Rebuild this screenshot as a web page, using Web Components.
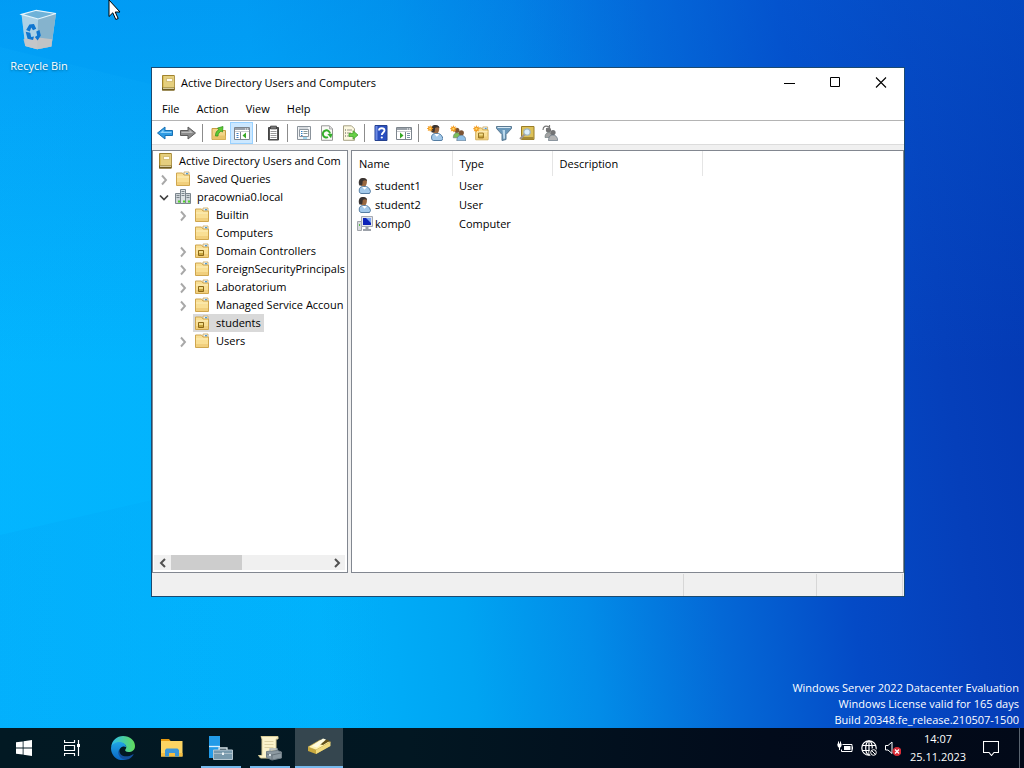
<!DOCTYPE html>
<html lang="en">
<head>
<meta charset="utf-8">
<title>Desktop</title>
<style>
  html, body { margin: 0; height: 100%; }
  body { font-family: "Open Sans", "Noto Sans", sans-serif; font-size: 11px; line-height: 16px; color: #000; overflow: hidden; }
</style>
</head>
<body>
<desk-top>
  <desktop-icon icon="bin">Recycle Bin</desktop-icon>
  <app-window slot="window" heading="Active Directory Users and Computers">
    <menu-bar slot="menu"></menu-bar>
    <tool-bar slot="tools"></tool-bar>
    <tree-view slot="tree"></tree-view>
    <list-view slot="list"></list-view>
    <status-bar slot="status"></status-bar>
  </app-window>
  <license-note slot="note"></license-note>
  <task-bar slot="taskbar"></task-bar>
</desk-top>

<script>
const folder = `<path d="M9 1h5v4H9z" fill="#eef4f8" stroke="#c9a455" stroke-width=".8"/><path d="M11 2h2v1.500h-2z" fill="#4b9bd8"/><path d="M1.500 3V2h6l1.500 2h5.500v10.500h-13z" fill="#f9df94" stroke="#cfa64e"/><path d="M2 5.500h12v1H2z" fill="#fdeebd"/><path d="M2 11h12v3H2z" fill="#f1cf7c"/>`;
const ouMark = `<path d="M4.500 7.500h5v5h-5z" fill="#c9a640" stroke="#8a6717"/><path d="M5 8h4v2H5z" fill="#f3dc88"/>`;
const user = `<path d="M3 2.500C3.500-.3 9-.8 9.800 2.500c.5 2.300-.5 5.500-2 6.500L4 7.500C2.500 6 2.500 4 3 2.500z" fill="#9a6840"/><path d="M2.500 7.500C1 5 1.500-.5 6.200 0c3 .2 4 1.500 3.800 3C8.500 2 7 2.300 5.800 3l-.6 4.500z" fill="#3a3432"/><path d="M5 7h3v3H5z" fill="#a8703f"/><path d="M2.500 14.500c-.8-4 .5-5.500 3-6 4-.5 7 .5 8 5l-1 2H4z" fill="#a3c9ea" stroke="#45709a" stroke-width=".9"/><path d="M5 8.800l2.500 3L10 9.200" fill="#fff"/>`;
const star = `<path d="M4.500 0l1 2.600L8 1.500 7 4l2.500 1-2.500 1 1 2.500-2.500-1L4.500 10l-1-2.500L1 8.500 2 6-.5 5 2 4 1 1.500l2.500 1.100z" fill="#f39a1c"/><circle cx="4.500" cy="5" r="1.500" fill="#ffd66b"/>`;
const people = (a, b, s) => `<circle cx="6.500" cy="5" r="2.600" fill="${s}"/><path d="M3 12.500c0-4 2-5 4-5 2.500 0 4 2 4 5z" fill="${a}" stroke="#566" stroke-width=".5"/><circle cx="11" cy="7.500" r="2.600" fill="${s}"/><path d="M6.500 15.500c0-4 2-5.500 4.500-5.500 2.600 0 4.700 2 4.700 5.500z" fill="${b}" stroke="#567" stroke-width=".6"/>`;
const book = `<path d="M2.500.5h11.800v14.500H2.500z" fill="#dcc05a" stroke="#a1832f"/><path d="M4 1h10v11H4z" fill="#e5cf7e"/><path d="M2 12.500h12.500v3H2z" fill="#6f5c22"/><path d="M3 12.800h11v1H3z" fill="#efe6bd"/><path d="M6.500 3.500h6v3h-6z" fill="#fffdf0" stroke="#c2a653" stroke-width=".6"/>`;
const pane = `<path d="M.5 2.500h15v12H.5z" fill="#fff" stroke="#7d858d"/><path d="M1 3h14v2H1z" fill="#9aa1a9"/><path d="M11 3.500h1v1h-1zM13 3.500h1v1h-1z" fill="#fff"/><path d="M1 6h14v1H1z" fill="#c8ccd0"/>`;

const ICONS = {
  book,
  folder,
  ou: folder + ouMark,
  domain: `<path d="M5.500.5h5v14h-5z" fill="#dde2e5" stroke="#7c868e"/><path d="M.5 4.500h5v10h-5zM10.500 4.500h5v10h-5z" fill="#cfd5d9" stroke="#7c868e"/><path d="M6.500 2.500h3M6.500 4.500h3M6.500 6.500h3M1.500 6.500h3M1.500 8.500h3M11.500 6.500h3M11.500 8.500h3" stroke="#7c878e"/><path d="M3 11.500h2v2H3zM8 11.500h2v2H8zM13 11.500h2v2h-2z" fill="#4fd02a"/>`,
  user,
  computer: `<path d="M.5 5.500h4v9h-4z" fill="#d7dade" stroke="#a0a5ab"/><path d="M2 8h1v2H2z" fill="#56b947"/><path d="M4.500.5h11v10h-11z" fill="#e4e6ea" stroke="#a5a9b2"/><path d="M6 2h8v7H6z" fill="#0d22b8"/><path d="M9 2h5v5z" fill="#7fa6f4"/><path d="M8.500 11h3v2h2.500v2H6v-2h2.500z" fill="#9ca1a9"/>`,
  back: `<path d="M8 2v3.500h7.500v5H8V14L.5 8z" fill="#2f9be3" stroke="#1670b4"/><path d="M6.500 4.500v2.200h8v1.200H3z" fill="#8fd2fb"/>`,
  forward: `<path d="M8 2v3.500H.5v5H8V14l7.500-6z" fill="#8b8b8b" stroke="#5d5d5d"/><path d="M9.500 4.500v2.200h-8v1.200H13z" fill="#bdbdbd"/>`,
  up: `<path d="M1 3.500h6l1.500 2h6v9H1z" fill="#f3d488" stroke="#c79c42"/><path d="M1.500 10.500h13v4h-13z" fill="#e9c46a"/><path d="M4.500 11c0-3.500 1-5 3.500-6.500L6.500 3 12 1.500l-.5 5.500L10 6C8 7.500 7 9 7 11z" fill="#5ecb34" stroke="#2b8d19" stroke-width=".7"/>`,
  panes: pane + `<path d="M2.500 8.500h2M2.500 10.500h2M2.500 12.500h2" stroke="#3d7fc1"/><path d="M6.500 7v7" stroke="#7d858d"/><path d="M12 7.500v6L8.500 10.500z" fill="#36a824"/>`,
  clip: `<path d="M3.500 2.500h10v12.500h-10z" fill="#555" stroke="#444"/><path d="M5 4h7v10H5z" fill="#fff"/><path d="M5.500 1h6v3h-6z" fill="#777" stroke="#333" stroke-width=".6"/><path d="M5.500 6.500h6M5.500 8.500h6M5.500 10.500h6M5.500 12.500h6" stroke="#999"/>`,
  props: `<path d="M1.500 1.500h13v13h-13z" fill="#f2f4f6" stroke="#8b939b"/><path d="M3.500 4.500h9v7h-9z" fill="#fff" stroke="#8e969e"/><path d="M5 6.500h1.500M5 8.500h1.500M5 10.500h1.500" stroke="#2f7fc4"/><path d="M7.500 6.500h4M7.500 8.500h4" stroke="#899"/><path d="M7 13h4" stroke="#4ab5e6"/><path d="M3 3h9" stroke="#bac0c6"/>`,
  refresh: `<path d="M2.500.8h8l3 3v11.500h-11z" fill="#fbfbf7" stroke="#989898"/><path d="M10.500 1v3h3" fill="#ddd" stroke="#999" stroke-width=".7"/><path d="M9 12.200A3.600 3.600 0 1 1 11 8.500" fill="none" stroke="#34ad2b" stroke-width="2"/><path d="M8.300 9l5.200-.3L12 13.200z" fill="#34ad2b"/>`,
  export: `<path d="M1.500.8h8l3 3v11.500h-11z" fill="#fcf8e0" stroke="#a5a084"/><path d="M3 5h1M3 8h1M3 11h1" stroke="#555"/><path d="M5 5h5M5 8h4M5 11h3" stroke="#9a9a8a"/><path d="M7 8.500h4V5.700l5 4.300-5 4.300v-2.800H7z" fill="#67d046" stroke="#3c9a26" stroke-width=".7"/>`,
  help: `<path d="M2 .5h12v15H2z" fill="#2a4fc0" stroke="#24408e"/><path d="M2.500 1h2v14h-2z" fill="#6d8ae2"/><path d="M6 5.500C6 2.500 11.500 2.500 11.500 5.500 11.500 7.500 8.800 7.600 8.800 10" fill="none" stroke="#fff" stroke-width="1.800"/><circle cx="8.800" cy="12.500" r="1.100" fill="#fff"/>`,
  action: pane + `<path d="M9.500 7v7" stroke="#7d858d"/><path d="M11 8.500h3M11 10.500h3M11 12.500h3" stroke="#7a92a8"/><path d="M4 7.500v6l3.500-3z" fill="#36a824"/>`,
  newuser: `<g transform="translate(2.300 0)">${user}</g><g transform="scale(.7)">${star}</g>`,
  newgroup: `<g transform="translate(.3 .3)">${people('#7cc05a', '#8fc0e8', '#7b5334')}</g><g transform="scale(.75)">${star}</g>`,
  newou: `<g transform="translate(1.300 1)scale(.95)">${folder}${ouMark}</g><g transform="scale(.75)">${star}</g>`,
  filter: `<path d="M.5 1.500h15v2L10 9.500v5l-4 1v-6L.5 3.500z" fill="#6a98ba" stroke="#5b7a92"/><path d="M1.500 2h13v1h-13z" fill="#d5e8f4"/><path d="M6.500 5h2.500v8.500l-1.500.5z" fill="#bddaed"/>`,
  find: `<path d="M2.500 1.500h12.500v13H2.500z" fill="#dcc159" stroke="#9a7d26"/><path d="M3 12h11.500v2.500H3z" fill="#a58a35"/><circle cx="8" cy="7" r="3.200" fill="#dceffc" stroke="#9fb4c0" stroke-width="1.200"/><path d="M5.500 9.500l-4.500 4.500" stroke="#9f9690" stroke-width="2"/>`,
  delegate: people('#a3a3a3', '#b4b4b4', '#747474') + `<path d="M1 5C1 1 4 .3 7 2M7.500 0v3.500H4" fill="none" stroke="#777" stroke-width="1.200"/>`,
  right: `<path d="M6 4.500L10 9l-4 4.500" fill="none" stroke="#a8a8a8" stroke-width="1.900"/>`,
  down: `<path d="M4 6.500l4 4 4-4" fill="none" stroke="#404040" stroke-width="1.700"/>`,
  scrollleft: `<path d="M10 4L6 8l4 4" fill="none" stroke="#505050" stroke-width="2"/>`,
  scrollright: `<path d="M6 4l4 4-4 4" fill="none" stroke="#505050" stroke-width="2"/>`,
  min: `<path d="M3 8.500h11" stroke="#000"/>`,
  max: `<path d="M3.500 2.500h9v9h-9z" fill="none" stroke="#000"/>`,
  close: `<path d="M3 2.500l10 10M13 2.500l-10 10" stroke="#000" stroke-width="1.100"/>`,
  bin: ['0 0 48 48', `<path d="M5 7l16-4.500L42.500 6l-5 36L22 45 9 41.500z" fill="#a8cfe4" opacity=".85"/><path d="M5 7l18 5 19.500-6L37.500 42 22 45 9 41.500z" fill="#b8d6e6" opacity=".7"/><path d="M23 12l19.500-6-5 36L22 45z" fill="#78a8c4" opacity=".75"/><path d="M7 34l14-2 17.500 2-1 8L22 45 9 41.500z" fill="#c8c4c4" opacity=".9"/><path d="M5 7l16-4.500L42.500 6 23 12z" fill="#6fb2d8" stroke="#e4f4fc" stroke-width="1.300"/><path d="M10 24l3.500-6 5-.5 2.500 5-3.500 1.800-2-3-1.500 4.200zM9.500 26l5 1 1 4.500 3-.5-1 4-6-1.500zM21 25.500l3.500-1.500 1.500 6-3.500 5.500-3-4 2.500-1.500z" fill="#0f76d0"/>`],
  start: `<path d="M0 2.300L6.700 1.400v6.200H0zM7.500 1.300L16 0v7.600H7.500zM0 8.400h6.700v6.200L0 13.700zM7.500 8.400H16V16l-8.500-1.300z" fill="#fff"/>`,
  task: `<path d="M.5 0v2.500h10V0M.5 16v-2.500h10V16M.5 5.500h10v5H.5zM14.500 0v16" fill="none" stroke="#fff" stroke-width="1.200"/><path d="M13 4h3v3h-3z" fill="#fff"/>`,
  edge: ['0 0 24 24', `<defs><linearGradient id="a" x2="1"><stop stop-color="#2dbcee"/><stop offset="1" stop-color="#61dc5a"/></linearGradient><linearGradient id="b" y2="1" x2="0"><stop stop-color="#21a5e5"/><stop offset="1" stop-color="#0865c4"/></linearGradient></defs><path d="M.2 11C1 4 6 0 12 0c7 0 12 4.500 12 10 0 4-3 6-6.500 6-3 0-4-1.500-3-2.700 2.500-3-1-6.300-5-6.300C5 7 2 8.500.2 11z" fill="url(#a)"/><path d="M0 12C.5 8.500 4 6 8.500 6c4 0 6.800 2.700 6.500 5-4-2-8 2-6.500 6.500C10 22 14 23.500 16.500 23 7 27 0 20 0 12z" fill="url(#b)"/><path d="M8.300 13.500c-.8 5.500 6 9.500 13.700 4.700.4-.2.700.1.500.5-2 3.300-4.500 4.500-6.500 4.900-6 1-11-6-7.700-10.100z" fill="#134f9b"/>`],
  explorer: ['0 0 24 24', `<path d="M1 3h8l2 2.500H1z" fill="#e79a10"/><path d="M1 5h21.500v15.500H1z" fill="#fcd462"/><path d="M1 17h21.500v3.500H1z" fill="#f4bd42"/><path d="M5 20.500V14l1.500-1.500h11L19 14v6.500h-4V17H9v3.500z" fill="#3b96d9"/>`],
  server: ['0 0 26 26', `<path d="M1 1h11v22H1z" fill="#229be8"/><path d="M1 11.500h11" stroke="#d9f0ff" stroke-width="1.300"/><path d="M11 15v-2h8v2" fill="none" stroke="#dae5ea" stroke-width="1.300"/><path d="M5.500 15h19v9.500h-19z" fill="#7899ac" stroke="#b5c6d0"/><path d="M6 18.500h18" stroke="#a9bdc8"/><path d="M14 17.500h2v2.500h-2z" fill="#eef5f8"/>`],
  scroll: ['0 0 26 26', `<path d="M4 1.500h17V4h-2v19H3.500l-2-2.500H5V4z" fill="#fbf3cb" stroke="#d9cd98"/><path d="M7.500 6.500h9M7.500 9.500h9M7.500 12.500h9" stroke="#ddd2a4"/><path d="M13 16v-2h7v2" fill="none" stroke="#aeb8bf" stroke-width="1.300"/><path d="M9.500 16.500l11-1 4 1.500v6L15 25l-5.500-2.500z" fill="#8c99a1" stroke="#6f7c85"/><path d="M10 19l5 1 9-2M15 20v5" fill="none" stroke="#66737b"/><path d="M12 19h2v2h-2z" fill="#dce4e8"/>`],
  drawer: ['0 0 26 26', `<path d="M2 12v4l8 3 14-8V7z" fill="#c8a93e"/><path d="M2 12L14 5l10.500 2L10 15z" fill="#fff3b0" stroke="#b89c40" stroke-width=".6"/><path d="M10 15l14.500-8v4L10 19z" fill="#f0da7e"/><path d="M12.500 9L21 4.500 23.500 6l-6.500 4z" fill="#62501a"/><path d="M6 11l11-7.500 3 1-5.500 5-3.500 3z" fill="#fffce0"/>`],
  battery: `<path d="M5.500 4.500h9.500v7H4.500v-2" fill="none" stroke="#fff"/><path d="M7 6h6.500v4H7z" fill="#fff"/><path d="M15.500 6.500v3M.5 4h4M1.500 1.500V4M3.500 1.500V4M2.500 7v3" stroke="#fff"/><path d="M.5 4h4v2l-1 1.500h-2L.5 6z" fill="#fff"/>`,
  globe: `<g fill="none" stroke="#fff" stroke-width="1.200"><circle cx="8" cy="8" r="7.200"/><ellipse cx="8" cy="8" rx="3.300" ry="7"/><path d="M1.300 5.500h13.400M1.300 10.500h13.400M8 1v14"/></g><circle cx="12.500" cy="12.500" r="4.200" fill="#050c18"/><circle cx="12.500" cy="12.500" r="2.800" fill="none" stroke="#fff"/><path d="M10.500 10.500l4 4" stroke="#fff"/>`,
  sound: `<path d="M.5 5.500h2.500l4-3.500v11.500l-4-3.500H.5z" fill="none" stroke="#fff"/><circle cx="12" cy="11.500" r="4.500" fill="#d92b36"/><path d="M10 9.500l4 4M14 9.500l-4 4" stroke="#fff" stroke-width="1.300"/>`,
  notice: `<path d="M.5 1.500h15v11H11L8.500 15.500 6 12.500H.500z" fill="none" stroke="#fff" stroke-width="1.100"/>`,
  cursor: ['0 0 13 20', `<path d="M1 0v16.500l3.800-3.700 3 6.700 2.400-1-3-6.500H12z" fill="#fff" stroke="#000"/>`]
};

function define(name, html, setup) {
  const template = document.createElement('template');
  template.innerHTML = html;
  customElements.define(name, class extends HTMLElement {
    connectedCallback() {
      if (this.shadowRoot) return;
      this.attachShadow({ mode: 'open' }).append(template.content.cloneNode(true));
      if (setup) setup(this, this.shadowRoot);
    }
  });
}

define('ui-icon', `<style>:host{display:block;flex:none;width:16px;height:16px}svg{display:block;width:100%;height:100%}</style>`, (el, root) => {
  const icon = ICONS[el.getAttribute('name')];
  if (!icon) return;
  const [box, shapes] = Array.isArray(icon) ? icon : ['0 0 16 16', icon];
  root.innerHTML += `<svg viewBox="${box}" aria-hidden="true">${shapes}</svg>`;
});

define('desktop-icon', `
  <style>
    :host{display:block;width:78px}
    button{display:flex;flex-direction:column;align-items:center;gap:6px;width:100%;padding:8px 0 0;border:0;background:none;font:inherit;color:#fff;text-shadow:0 1px 2px #0348}
    ui-icon{width:44px;height:44px}
  </style>
  <button><ui-icon></ui-icon><span><slot></slot></span></button>`,
  (el, root) => {
    const icon = document.createElement('ui-icon');
    icon.setAttribute('name', el.getAttribute('icon'));
    root.querySelector('ui-icon').replaceWith(icon);
  });

define('desk-top', `
  <style>
    :host{display:flex;flex-direction:column;height:100vh}
    main{flex:1;min-height:0;position:relative;
      background:
        linear-gradient(180deg,#0468e050 0,#0468e000 50%),
        linear-gradient(83deg,#00b4ff 0,#00b2fc 30%,#00a4f2 43%,#028ce8 54%,#0468d6 66%,#044ac6 78%,#053fba 89%,#0338b2 100%)}
    .rays{position:absolute;inset:0;width:100%;height:100%}
    .cursor{position:absolute;left:108px;top:0;width:13px;height:20px}
    .items{position:relative}
    .window{position:absolute;inset:67px 119px 131px 151px;display:flex}
    .note{position:absolute;right:5px;bottom:0}
  </style>
  <main>
    <svg class="rays" viewBox="0 0 1024 728" preserveAspectRatio="none" aria-hidden="true">
      <defs>
        <linearGradient id="beam" gradientUnits="userSpaceOnUse" x1="0" y1="0" x2="400" y2="0"><stop stop-color="#20c0ff" stop-opacity=".1"/><stop offset="1" stop-color="#20c0ff" stop-opacity="0"/></linearGradient>
        <linearGradient id="shade" gradientUnits="userSpaceOnUse" x1="0" y1="0" x2="400" y2="0"><stop stop-color="#0070d8" stop-opacity=".07"/><stop offset="1" stop-color="#0070d8" stop-opacity="0"/></linearGradient>
      </defs>
      <path d="M0 47L500 170V728H0z" fill="url(#beam)"/>
      <path d="M0 535L500 420V728H0z" fill="url(#shade)"/>
    </svg>
    <div class="items"><slot></slot></div>
    <div class="window"><slot name="window"></slot></div>
    <div class="note"><slot name="note"></slot></div>
    <ui-icon class="cursor" name="cursor"></ui-icon>
  </main>
  <slot name="taskbar"></slot>`);

define('license-note', `
  <style>:host{display:block;color:#fff;text-align:right}p{margin:0}</style>
  <p>Windows Server 2022 Datacenter Evaluation</p>
  <p>Windows License valid for 165 days</p>
  <p>Build 20348.fe_release.210507-1500</p>`);

define('app-window', `
  <style>
    :host{flex:1;min-width:0;display:flex;flex-direction:column;box-sizing:border-box;border:1px solid #1a4a72;background:#f0f0f0}
    header{display:flex;align-items:center;gap:5px;height:30px;padding-left:8px;background:#fff}
    h1{flex:1;margin:0;font:inherit}
    .controls{display:flex}
    .controls button{display:flex;align-items:center;justify-content:center;width:46px;height:30px;padding:0;border:0;background:none}
    .panes{flex:1;min-height:0;display:grid;grid-template-columns:196px minmax(0,1fr);gap:3px;padding-top:5px}
  </style>
  <header>
    <ui-icon name="book"></ui-icon><h1></h1>
    <div class="controls">
      <button aria-label="Minimize"><ui-icon name="min"></ui-icon></button>
      <button aria-label="Maximize"><ui-icon name="max"></ui-icon></button>
      <button aria-label="Close"><ui-icon name="close"></ui-icon></button>
    </div>
  </header>
  <slot name="menu"></slot>
  <slot name="tools"></slot>
  <div class="panes"><slot name="tree"></slot><slot name="list"></slot></div>
  <slot name="status"></slot>`,
  (el, root) => { root.querySelector('h1').textContent = el.getAttribute('heading'); });

define('menu-bar', `
  <style>
    :host{display:block;background:#fff}
    nav{display:flex;gap:1px;height:22px;padding-left:2px}
    button{padding:0 8px;border:0;background:none;font:inherit}
  </style>
  <nav><button>File</button><button>Action</button><button>View</button><button>Help</button></nav>`);

define('tool-bar', `
  <style>
    :host{display:flex;padding:1px 0 0 1px;background:#fff;border:solid #b4b4b4;border-width:1px 0;border-bottom-color:#dcdcdc}
    button{display:flex;align-items:center;justify-content:center;width:23px;height:22px;padding:0;border:0;background:none}
    button[aria-pressed]{background:#cce8ff;box-shadow:inset 0 0 0 1px #99d1ff}
    i{width:1px;margin:2px 4px 2px 3px;background:#8c8c8c}
  </style>`,
  (el, root) => {
    const groups = [
      [['back', 'Back'], ['forward', 'Forward']],
      [['up', 'Up one level'], ['panes', 'Show or hide console tree']],
      [['clip', 'Copy']],
      [['props', 'Properties'], ['refresh', 'Refresh'], ['export', 'Export list']],
      [['help', 'Help'], ['action', 'Show or hide action pane']],
      [['newuser', 'New user'], ['newgroup', 'New group'], ['newou', 'New organizational unit'], ['filter', 'Filter'], ['find', 'Find'], ['delegate', 'Add to group']]
    ];
    root.innerHTML += groups.map(group => group.map(([icon, label]) =>
      `<button aria-label="${label}"${icon === 'panes' ? ' aria-pressed="true"' : ''}><ui-icon name="${icon}"></ui-icon></button>`).join('')).join('<i></i>');
  });

define('tree-view', `
  <style>
    :host{display:flex;flex-direction:column;min-width:0;box-sizing:border-box;border:1px solid #828790;background:#fff;overflow:hidden}
    ul{list-style:none;margin:0;padding:0}
    .root{flex:1;padding:1px 0 0 3px;overflow:hidden}
    .root ul ul{padding-left:19px}
    .row{display:flex;align-items:center;height:18px;white-space:nowrap}
    .twist{flex:none;width:18px}
    .root > li > .row .twist{display:none}
    .label{flex:none;display:flex;align-items:center;gap:6px;height:18px;padding:0 3px 0 1px}
    .selected{background:#d9d9d9}
    .bar{display:flex;align-items:center;height:15px;margin:0 2px 2px 1px;background:#f0f0f0}
    .bar button{display:flex;align-items:center;justify-content:center;width:17px;height:15px;padding:0;border:0;background:none}
    .track{flex:1;display:flex;align-self:stretch}
    .thumb{width:45%;background:#cdcdcd}
  </style>
  <ul class="root" role="tree"></ul>
  <div class="bar">
    <button aria-label="Scroll left"><ui-icon name="scrollleft"></ui-icon></button>
    <div class="track"><div class="thumb"></div></div>
    <button aria-label="Scroll right"><ui-icon name="scrollright"></ui-icon></button>
  </div>`,
  (el, root) => {
    const node = (label, icon = 'folder', twist = 'right', children = []) => ({ label, icon, twist, children });
    const tree = node('Active Directory Users and Com', 'book', '', [
      node('Saved Queries'),
      node('pracownia0.local', 'domain', 'down', [
        node('Builtin'), node('Computers', 'folder', ''), node('Domain Controllers', 'ou'),
        node('ForeignSecurityPrincipals'), node('Laboratorium', 'ou'), node('Managed Service Accoun'),
        node('students', 'ou', ''), node('Users')
      ])
    ]);
    const draw = n => `<li role="treeitem"><div class="row"><span class="twist">${n.twist ? `<ui-icon name="${n.twist}"></ui-icon>` : ''}</span>` +
      `<span class="label${n.label === 'students' ? ' selected' : ''}"><ui-icon name="${n.icon}"></ui-icon><span>${n.label}</span></span></div>` +
      (n.children.length ? `<ul role="group">${n.children.map(draw).join('')}</ul>` : '') + `</li>`;
    root.querySelector('.root').innerHTML = draw(tree);
  });

define('list-view', `
  <style>
    :host{display:block;min-width:0;box-sizing:border-box;border:1px solid #828790;background:#fff;overflow:hidden}
    table{width:100%;table-layout:fixed;border-collapse:collapse;text-align:left}
    th{height:25px;padding:0 7px;font-weight:400;box-sizing:border-box;border-right:1px solid #e5e5e5}
    th:last-child{border:0}
    td{height:19px;padding:0 7px;white-space:nowrap}
    td:first-child{padding:0 0 0 5px}
    td div{display:flex;align-items:center;gap:2px}
    .a,.b{width:100px}.c{width:150px}
  </style>
  <table>
    <colgroup><col class="a"><col class="b"><col class="c"><col></colgroup>
    <thead><tr><th>Name</th><th>Type</th><th>Description</th><th></th></tr></thead>
    <tbody>
      <tr><td><div><ui-icon name="user"></ui-icon>student1</div></td><td>User</td><td></td><td></td></tr>
      <tr><td><div><ui-icon name="user"></ui-icon>student2</div></td><td>User</td><td></td><td></td></tr>
      <tr><td><div><ui-icon name="computer"></ui-icon>komp0</div></td><td>Computer</td><td></td><td></td></tr>
    </tbody>
  </table>`);

define('status-bar', `
  <style>
    :host{display:flex;height:23px;background:#f0f0f0}
    span{box-sizing:border-box;border-right:1px solid #d7d7d7;margin-top:1px}
    span:nth-of-type(1){flex:1}
    span:nth-of-type(2){width:133px}
    span:nth-of-type(3){width:86px;margin-right:1px}
  </style><span></span><span></span><span></span>`);

define('task-bar', `
  <style>
    :host{display:flex;height:40px;color:#fff;background:linear-gradient(90deg,#021923,#021722 40%,#020b1b 75%,#020918)}
    nav{flex:1;display:flex;gap:1px}
    button{display:flex;align-items:center;justify-content:center;width:48px;height:40px;padding:0;border:0;background:none;font:inherit;color:inherit;box-sizing:border-box}
    .view{width:49px;padding-right:3px}
    .open{background:linear-gradient(#76b9ed,#76b9ed) center bottom/40px 2px no-repeat}
    .active{background:linear-gradient(#76b9ed,#76b9ed) center bottom/100% 2px no-repeat,#35464f}
    .big{width:24px;height:24px}
    .app{width:26px;height:26px}
    .tray{display:flex;padding-right:4px}
    .tray button{width:24px}
    .clock{width:58px;display:flex;flex-direction:column;justify-content:center;gap:2px;text-align:center}
    .notice{margin-right:4px}
    .peek{width:5px;border-left:1px solid #5a6470}
  </style>
  <nav>
    <button aria-label="Start"><ui-icon name="start"></ui-icon></button>
    <button class="view" aria-label="Task View"><ui-icon name="task"></ui-icon></button>
    <button aria-label="Microsoft Edge"><ui-icon class="big" name="edge"></ui-icon></button>
    <button aria-label="File Explorer"><ui-icon class="big" name="explorer"></ui-icon></button>
    <button class="open" aria-label="Server Manager"><ui-icon class="app" name="server"></ui-icon></button>
    <button class="open" aria-label="Group Policy Management"><ui-icon class="app" name="scroll"></ui-icon></button>
    <button class="active" aria-label="Active Directory Users and Computers"><ui-icon class="app" name="drawer"></ui-icon></button>
  </nav>
  <div class="tray">
    <button aria-label="Battery"><ui-icon name="battery"></ui-icon></button>
    <button aria-label="Network"><ui-icon name="globe"></ui-icon></button>
    <button aria-label="Volume"><ui-icon name="sound"></ui-icon></button>
  </div>
  <div class="clock"><span>14:07</span><span>25.11.2023</span></div>
  <button class="notice" aria-label="Notifications"><ui-icon name="notice"></ui-icon></button>
  <button class="peek" aria-label="Show desktop"></button>`);
</script>
</body>
</html>
